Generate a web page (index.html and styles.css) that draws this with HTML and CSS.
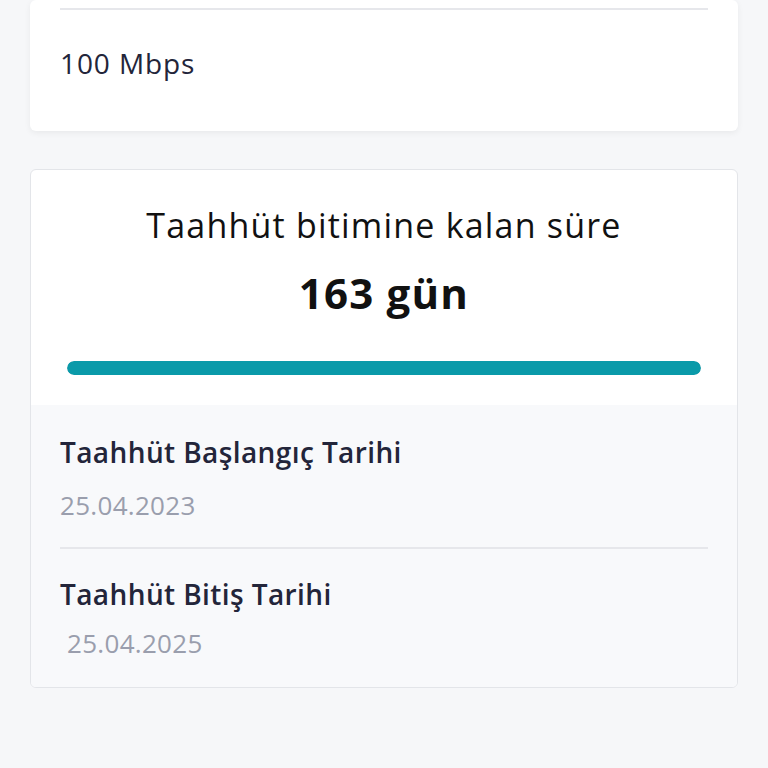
FILE: index.html
```html
<!DOCTYPE html>
<html lang="tr">
<head>
<meta charset="utf-8">
<link rel="stylesheet" href="styles.css">
</head>
<body>
<div class="page">
  <section class="card speed-card">
    <div class="divider"></div>
    <div class="speed">100 Mbps</div>
  </section>
  <section class="card commit-card">
    <div class="commit-top">
      <div class="commit-title">Taahhüt bitimine kalan süre</div>
      <div class="commit-days">163 gün</div>
      <div class="bar"><div class="bar-fill"></div></div>
    </div>
    <div class="commit-bottom">
      <div class="row">
        <div class="row-label">Taahhüt Başlangıç Tarihi</div>
        <div class="row-value">25.04.2023</div>
      </div>
      <div class="row">
        <div class="row-label">Taahhüt Bitiş Tarihi</div>
        <div class="row-value indent">25.04.2025</div>
      </div>
    </div>
  </section>
</div>
</body>
</html>
```
FILE: styles.css
```css
html, body {
  margin: 0;
  padding: 0;
  background: #f6f7f9;
  font-family: "Open Sans", "Noto Sans", sans-serif;
  color: #23253a;
}
.page {
  padding: 0 30px;
  display: flex;
  flex-direction: column;
  gap: 38px;
}
.card {
  background: #fff;
  border-radius: 6px;
}
.speed-card {
  padding: 8px 30px 0;
  height: 123px;
  box-shadow: 0 2px 6px rgba(0,0,0,0.06);
}
.divider {
  height: 2px;
  background: #e6e7eb;
}
.speed {
  font-size: 28px;
  line-height: 32px;
  margin-top: 37px;
  letter-spacing: 0.9px;
}
.commit-card {
  border: 1px solid #e3e5e9;
  overflow: hidden;
}
.commit-top {
  padding: 33px 36px 30px;
  text-align: center;
  color: #111;
}
.commit-title {
  font-size: 34px;
  line-height: 44px;
  letter-spacing: 1.2px;
}
.commit-days {
  font-size: 42px;
  font-weight: 700;
  line-height: 52px;
  margin-top: 20px;
  letter-spacing: 1.2px;
}
.bar {
  margin-top: 42px;
  height: 14px;
  border-radius: 7px;
  background: #e6e7eb;
  overflow: hidden;
}
.bar-fill {
  height: 100%;
  width: 100%;
  background: #0a9aa9;
  border-radius: 7px;
}
.commit-bottom {
  background: #f8f9fb;
  padding: 0 29px;
}
.row {
  padding: 30px 0 26px;
}
.row + .row {
  border-top: 2px solid #e6e7eb;
  padding-top: 28px;
  padding-bottom: 28px;
}
.row-label {
  font-size: 28px;
  font-weight: 600;
  line-height: 34px;
  letter-spacing: 0.4px;
}
.row-value {
  font-size: 26px;
  line-height: 32px;
  color: #9a9ead;
  margin-top: 20px;
  letter-spacing: 0.3px;
}
.row + .row .row-value {
  margin-top: 16px;
}
.indent {
  padding-left: 7px;
}
```
